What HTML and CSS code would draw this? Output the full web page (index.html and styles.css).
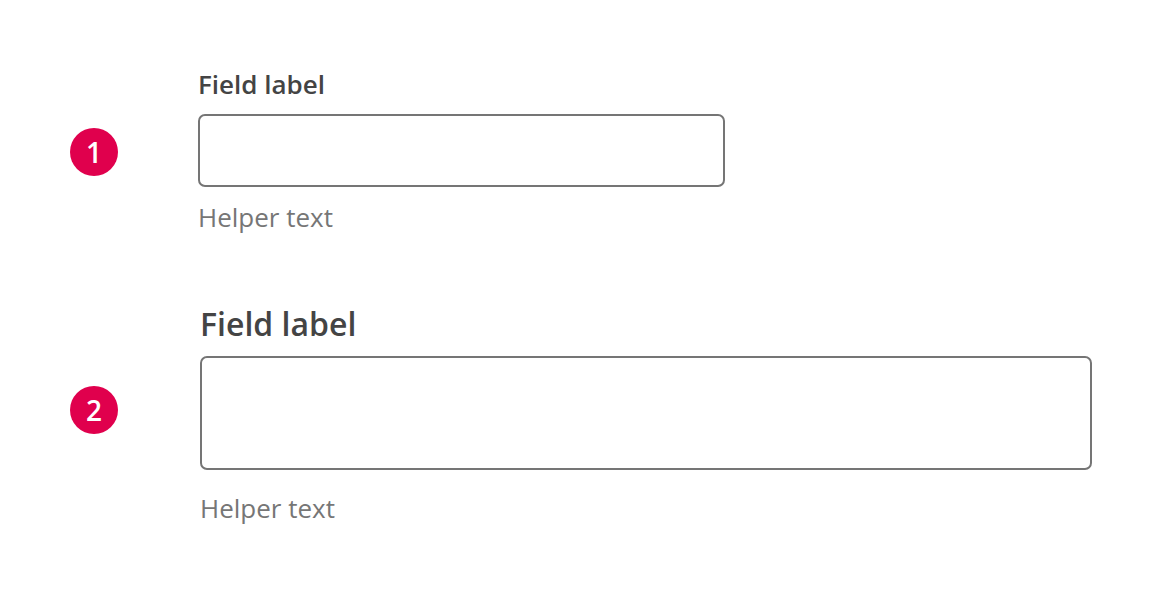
FILE: index.html
```html
<!DOCTYPE html>
<html lang="en">
<head>
<meta charset="utf-8">
<title>Field sizes</title>
<link rel="stylesheet" href="styles.css">
</head>
<body>
<main class="page">
  <section class="row row-small">
    <span class="badge badge-small">1</span>
    <div class="field field-small">
      <label class="label">Field label</label>
      <div class="input"></div>
      <div class="helper">Helper text</div>
    </div>
  </section>
  <section class="row row-large">
    <span class="badge badge-large">2</span>
    <div class="field field-large">
      <label class="label">Field label</label>
      <div class="input"></div>
      <div class="helper">Helper text</div>
    </div>
  </section>
</main>
</body>
</html>
```

FILE: styles.css
```css
* { box-sizing: border-box; }
html, body { margin: 0; padding: 0; background: #ffffff; }
body { font-family: "Open Sans", "Noto Sans", sans-serif; width: 1160px; height: 604px; overflow: hidden; }

.page { padding: 68px 0 0 70px; display: flex; flex-direction: column; }

.row { display: flex; align-items: flex-start; }
.row-small { gap: 80px; }
.row-large { gap: 82px; margin-top: 71px; }

.badge {
  flex: none;
  width: 48px; height: 48px; border-radius: 50%;
  background: #e0004d; color: #ffffff;
  font-weight: 600; font-size: 28px; line-height: 48px;
  text-align: center;
}
.badge-small { margin-top: 60px; }
.badge-large { margin-top: 82px; }

.field { display: flex; flex-direction: column; }
.label { color: #444444; font-weight: 600; }
.input { border: 2px solid #757575; border-radius: 7px; background: #fff; }
.helper { color: #767676; font-size: 26px; line-height: 32px; }

.field-small .label { font-size: 26px; line-height: 32px; }
.field-small .input { margin-top: 14px; width: 527px; height: 73px; }
.field-small .helper { margin-top: 14px; }

.field-large .label { font-size: 32px; line-height: 40px; }
.field-large .input { margin-top: 12px; width: 892px; height: 114px; }
.field-large .helper { margin-top: 22px; }
```
